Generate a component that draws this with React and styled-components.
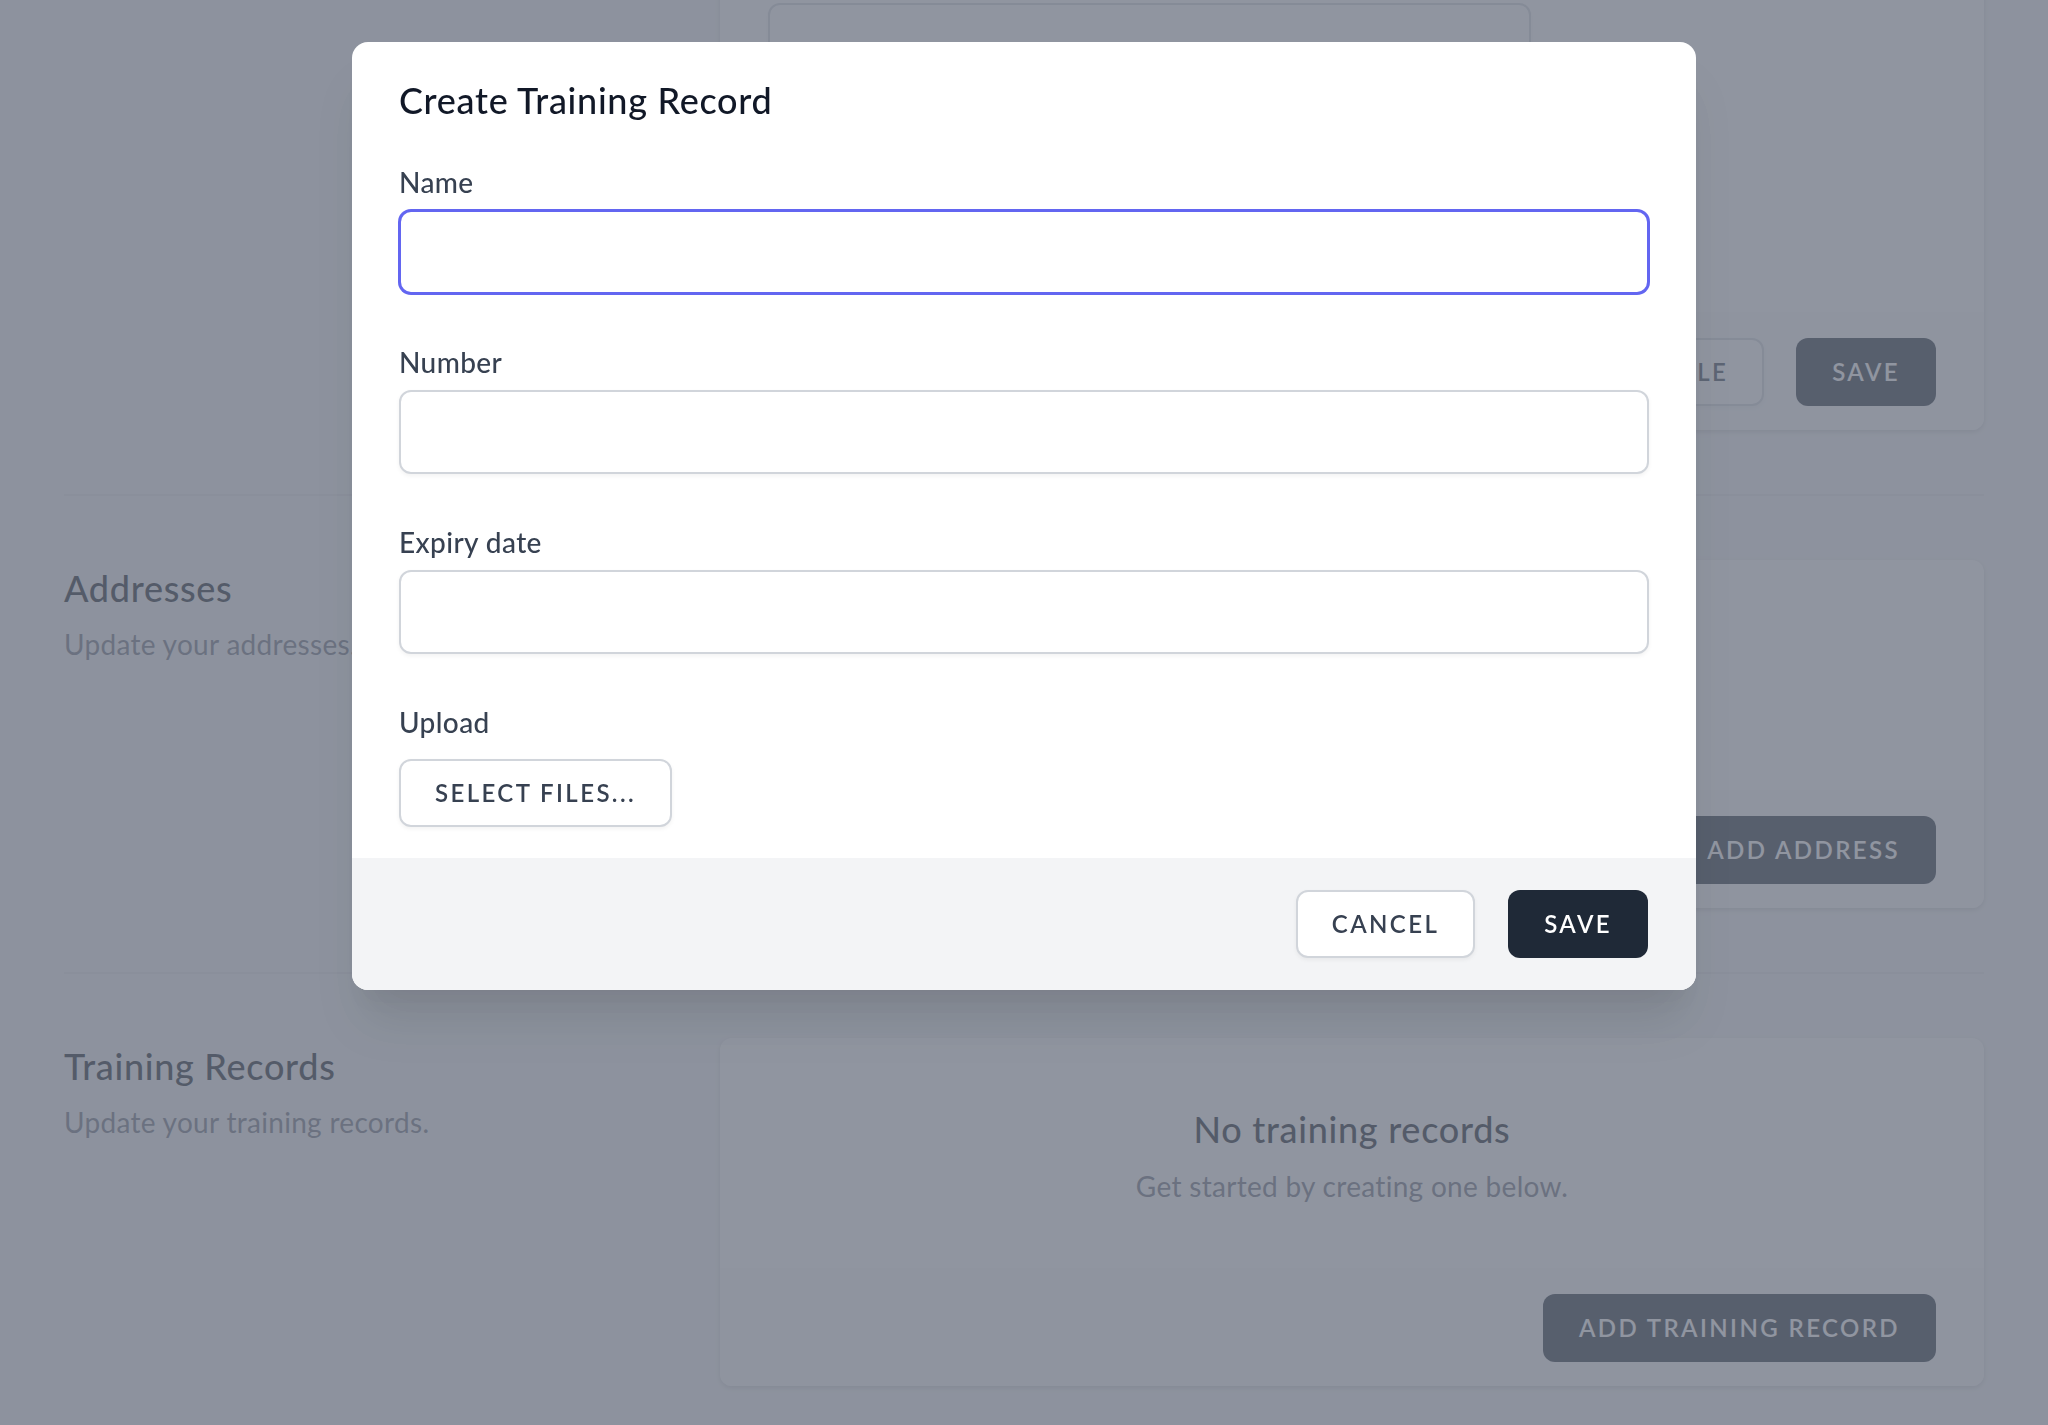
import React from "react";
import styled, { createGlobalStyle, css } from "styled-components";

const GlobalStyle = createGlobalStyle`
  * {
    box-sizing: border-box;
  }
  html,
  body {
    margin: 0;
    padding: 0;
  }
  body {
    font-family: Lato, "Noto Sans", sans-serif;
    background: #f3f4f6;
    height: 1425px;
    overflow: hidden;
  }
`;

const App = () => {
  return (
    <>
      <GlobalStyle />
      <Page>
        <Section>
          <Side />
          <Card>
            <CardBody>
              <FormGrid>
                <GridField $span={4}>
                  <TextArea aria-label="About" />
                </GridField>
              </FormGrid>
            </CardBody>
            <CardFooter>
              <Button type="button">View profile</Button>
              <Button type="button" $dark>
                Save
              </Button>
            </CardFooter>
          </Card>
        </Section>

        <Divider />

        <Section>
          <Side>
            <SideTitle>Addresses</SideTitle>
            <SideText>Update your addresses.</SideText>
          </Side>
          <Card>
            <CardBody $empty>
              <EmptyTitle>No addresses</EmptyTitle>
              <EmptyText>Get started by adding one below.</EmptyText>
            </CardBody>
            <CardFooter>
              <Button type="button" $dark>
                Add address
              </Button>
            </CardFooter>
          </Card>
        </Section>

        <Divider />

        <Section>
          <Side>
            <SideTitle>Training Records</SideTitle>
            <SideText>Update your training records.</SideText>
          </Side>
          <Card>
            <CardBody $empty>
              <EmptyTitle>No training records</EmptyTitle>
              <EmptyText>Get started by creating one below.</EmptyText>
            </CardBody>
            <CardFooter>
              <Button type="button" $dark>
                Add training record
              </Button>
            </CardFooter>
          </Card>
        </Section>
      </Page>

      <Overlay />
      <ModalWrap>
        <Modal>
          <ModalBody>
            <ModalTitle>Create Training Record</ModalTitle>
            <Field>
              <Label>Name</Label>
              <Input type="text" $active />
            </Field>
            <Field>
              <Label>Number</Label>
              <Input type="text" />
            </Field>
            <Field>
              <Label>Expiry date</Label>
              <Input type="text" />
            </Field>
            <Field $gap={17}>
              <Label>Upload</Label>
              <div>
                <Button type="button">Select files...</Button>
              </div>
            </Field>
          </ModalBody>
          <ModalFooter>
            <Button type="button">Cancel</Button>
            <Button type="button" $dark>
              Save
            </Button>
          </ModalFooter>
        </Modal>
      </ModalWrap>
    </>
  );
};

export default App;

// the page is scrolled a little, so the first card starts above the window
const Page = styled.main`
  margin-top: -45px;
  padding: 0 64px;
`;

const Section = styled.section`
  display: grid;
  grid-template-columns: repeat(3, 1fr);
  column-gap: 48px;
`;

const Divider = styled.div`
  margin: 64px 0;
  border-top: 2px solid #e5e7eb;
`;

const Side = styled.div``;

const SideTitle = styled.h3`
  margin: 0;
  font-size: 36px;
  line-height: 56px;
  font-weight: 500;
  letter-spacing: 0.7px;
  color: #111827;
`;

const SideText = styled.p`
  margin: 8px 0 0;
  font-size: 28px;
  line-height: 40px;
  letter-spacing: 0.3px;
  color: #6b7280;
  white-space: nowrap;
`;

const Card = styled.div`
  grid-column: span 2;
  background: #ffffff;
  border-radius: 12px;
  overflow: hidden;
  box-shadow: 0 2px 6px rgba(0, 0, 0, 0.1), 0 2px 4px rgba(0, 0, 0, 0.06);
`;

const CardBody = styled.div`
  padding: ${(props) => (props.$empty ? "63px 48px 62px" : "48px 48px 49px")};
`;

const CardFooter = styled.div`
  display: flex;
  justify-content: flex-end;
  gap: 32px;
  padding: 26px 48px 24px;
  background: #f9fafb;
`;

const FormGrid = styled.div`
  display: grid;
  grid-template-columns: repeat(6, 1fr);
  gap: 48px;
`;

const GridField = styled.div`
  grid-column: 1 / span ${(props) => props.$span};
  display: flex;
  flex-direction: column;
  gap: 8px;
`;

const EmptyTitle = styled.h3`
  margin: 0;
  text-align: center;
  font-size: 36px;
  line-height: 56px;
  font-weight: 500;
  letter-spacing: 0.7px;
  color: #111827;
`;

const EmptyText = styled.p`
  margin: 9px 0 0;
  text-align: center;
  font-size: 28px;
  line-height: 40px;
  letter-spacing: 0.3px;
  color: #6b7280;
`;

const Button = styled.button`
  font-family: inherit;
  font-size: 24px;
  font-weight: 600;
  line-height: 32px;
  letter-spacing: 0.1em;
  text-transform: uppercase;
  padding: 16px 34px;
  border-radius: 12px;
  border: 2px solid transparent;
  cursor: pointer;
  white-space: nowrap;
  ${(props) =>
    props.$dark
      ? css`
          background: #1f2937;
          color: #ffffff;
        `
      : css`
          background: #ffffff;
          color: #374151;
          border-color: #d1d5db;
          box-shadow: 0 2px 4px rgba(0, 0, 0, 0.05);
        `}
`;

const Label = styled.label`
  display: block;
  font-size: 28px;
  line-height: 40px;
  font-weight: 500;
  letter-spacing: 0.4px;
  color: #374151;
`;

const Input = styled.input`
  display: block;
  width: 100%;
  height: 84px;
  padding: 0 24px;
  font-family: inherit;
  font-size: 28px;
  background: #ffffff;
  border: 2px solid #d1d5db;
  border-radius: 12px;
  box-shadow: 0 2px 4px rgba(0, 0, 0, 0.05);
  outline: none;
  ${(props) =>
    props.$active &&
    css`
      border-color: #6366f1;
      box-shadow: 0 0 0 1px #6366f1;
    `}
`;

const TextArea = styled.textarea`
  display: block;
  width: 100%;
  height: 260px;
  resize: none;
  font-family: inherit;
  border: 2px solid #d1d5db;
  border-radius: 12px;
  box-shadow: 0 2px 4px rgba(0, 0, 0, 0.05);
`;

const Overlay = styled.div`
  position: fixed;
  inset: 0;
  background: rgba(107, 114, 128, 0.75);
`;

const ModalWrap = styled.div`
  position: fixed;
  inset: 0;
  display: flex;
  justify-content: center;
  align-items: flex-start;
  padding-top: 42px;
`;

const Modal = styled.div`
  width: 1344px;
  background: #ffffff;
  border-radius: 16px;
  overflow: hidden;
  box-shadow: 0 40px 50px -10px rgba(0, 0, 0, 0.1),
    0 20px 20px -10px rgba(0, 0, 0, 0.04);
`;

const ModalBody = styled.div`
  display: flex;
  flex-direction: column;
  padding: 30px 47px 31px;
`;

const ModalTitle = styled.h2`
  margin: 0 0 34px;
  font-size: 36px;
  line-height: 56px;
  font-weight: 500;
  letter-spacing: 0.7px;
  color: #111827;
`;

const Field = styled.div`
  display: flex;
  flex-direction: column;
  gap: ${(props) => props.$gap || 8}px;
  & + & {
    margin-top: 48px;
  }
`;

const ModalFooter = styled.div`
  display: flex;
  justify-content: flex-end;
  gap: 33px;
  padding: 32px 48px;
  background: #f3f4f6;
`;
